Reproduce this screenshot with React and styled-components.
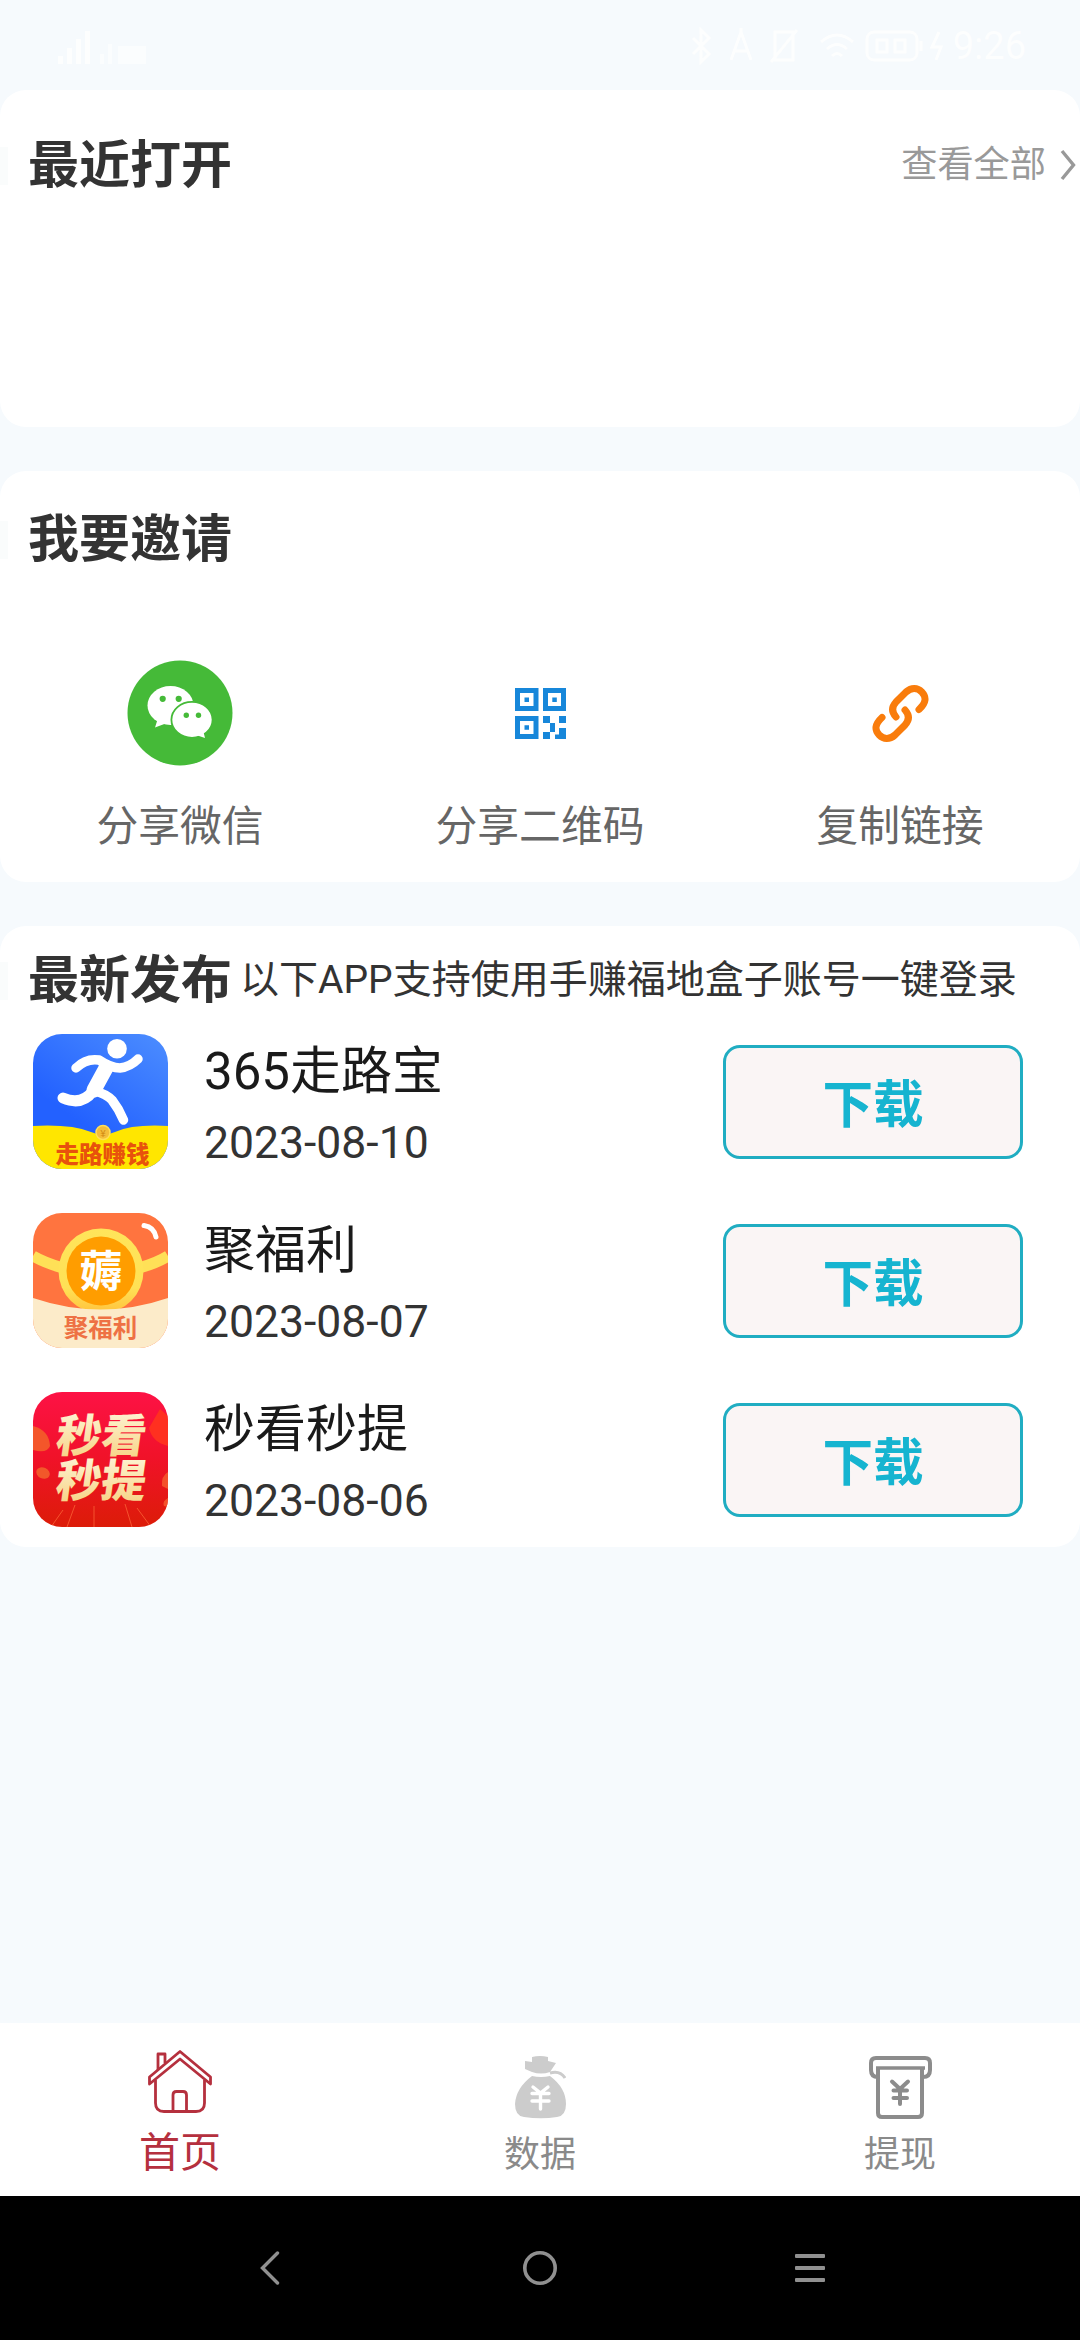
import React from "react";
import styled, { createGlobalStyle } from "styled-components";

const FONT = `Roboto, "Noto Sans CJK SC", sans-serif`;

const apps = [
  { name: "365走路宝", date: "2023-08-10", icon: <WalkIcon /> },
  { name: "聚福利", date: "2023-08-07", icon: <WelfareIcon /> },
  { name: "秒看秒提", date: "2023-08-06", icon: <FlashIcon /> }
];

const App = () => {
  return (
    <Screen>
      <GlobalStyle />
      <StatusBar>
        <SignalIcon />
        <StatusRight>
          <StatusIcons />
          <Clock>9:26</Clock>
        </StatusRight>
      </StatusBar>

      <Card $height="337px">
        <CardHeader $top="38px">
          <Title>最近打开</Title>
          <More>
            查看全部
            <svg width="16" height="32" viewBox="0 0 16 32" fill="none">
              <path d="M2 2 L13.5 16 L2 30" stroke="#999" strokeWidth="3.4" />
            </svg>
          </More>
        </CardHeader>
      </Card>

      <Card $height="411px">
        <CardHeader $top="31px">
          <Title>我要邀请</Title>
        </CardHeader>
        <ShareRow>
          <ShareItem>
            <IconSlot>
              <WechatIcon />
            </IconSlot>
            分享微信
          </ShareItem>
          <ShareItem>
            <IconSlot>
              <QrIcon />
            </IconSlot>
            分享二维码
          </ShareItem>
          <ShareItem>
            <IconSlot>
              <LinkIcon />
            </IconSlot>
            复制链接
          </ShareItem>
        </ShareRow>
      </Card>

      <Card $height="621px">
        <CardHeader $top="17px">
          <Title>最新发布</Title>
          <Subtitle>以下APP支持使用手赚福地盒子账号一键登录</Subtitle>
        </CardHeader>
        <AppList>
          {apps.map(app => (
            <AppRow key={app.name}>
              <AppIcon>{app.icon}</AppIcon>
              <AppInfo>
                <AppName>{app.name}</AppName>
                <AppDate>{app.date}</AppDate>
              </AppInfo>
              <Download>下载</Download>
            </AppRow>
          ))}
        </AppList>
      </Card>

      <Spacer />

      <TabBar>
        <Tab $active>
          <HomeIcon />
          <TabLabel $active>首页</TabLabel>
        </Tab>
        <Tab>
          <BagIcon />
          <TabLabel>数据</TabLabel>
        </Tab>
        <Tab>
          <CashIcon />
          <TabLabel>提现</TabLabel>
        </Tab>
      </TabBar>

      <SystemNav>
        <svg width="20" height="34" viewBox="0 0 20 34" fill="none">
          <path d="M17.5 2 L2.5 17 L17.5 32" stroke="#909090" strokeWidth="3.4" strokeLinecap="round" />
        </svg>
        <svg width="36" height="36" viewBox="0 0 36 36" fill="none">
          <circle cx="18" cy="18" r="15.2" stroke="#909090" strokeWidth="3.6" />
        </svg>
        <svg width="30" height="30" viewBox="0 0 30 30" fill="#909090">
          <rect y="1" width="30" height="4" rx="1" />
          <rect y="13" width="30" height="4" rx="1" />
          <rect y="25" width="30" height="4" rx="1" />
        </svg>
      </SystemNav>
    </Screen>
  );
};

export default App;

function SignalIcon() {
  return (
    <svg width="92" height="40" viewBox="0 0 92 40" fill="#fff">
      <path d="M0 38V30h5v8zM9 38V22h5v16zM18 38V13h5v25zM27 38V5h5v33z" />
      <path d="M42 38V28h4v10zM50 38V18h4v20zM60 20h28v18H60z" opacity="0.7" />
    </svg>
  );
}

function StatusIcons() {
  return (
    <svg width="260" height="44" viewBox="0 0 260 44" fill="none" stroke="#fff" strokeWidth="3">
      <path d="M4 14 L20 30 L12 38 V6 L20 14 L4 30" />
      <path d="M42 36 L52 8 L62 36 M46 27 H58 M52 4 V8" />
      <path d="M86 8 H104 V36 H86 Z M82 38 L108 6" />
      <path d="M132 18 Q148 4 164 18 M138 25 Q148 16 158 25 M143 32 Q148 27 153 32" />
      <rect x="178" y="8" width="50" height="28" rx="7" />
      <path d="M188 16 h10 v12 h-10 z M206 16 h10 v12 h-10 z M232 17 V27" />
      <path d="M250 8 L243 23 H252 L247 36" />
    </svg>
  );
}

function WechatIcon() {
  return (
    <svg width="106" height="106" viewBox="0 0 106 106">
      <circle cx="53" cy="53" r="52.5" fill="#45ba38" />
      <ellipse cx="43.5" cy="45.5" rx="23" ry="19.5" fill="#fff" />
      <path d="M31 58 L28 67.5 L40 63 Z" fill="#fff" />
      <ellipse cx="65" cy="59.8" rx="20.6" ry="18" fill="#fff" stroke="#45ba38" strokeWidth="1.8" />
      <path d="M69 75 L78 78 L76 70 Z" fill="#fff" />
      <g fill="#45ba38">
        <circle cx="35.7" cy="38.8" r="3.1" />
        <circle cx="51.7" cy="38.8" r="3.1" />
        <circle cx="59.3" cy="55.3" r="2.7" />
        <circle cx="71.5" cy="55.3" r="2.7" />
      </g>
    </svg>
  );
}

function QrIcon() {
  return (
    <svg width="51" height="51" viewBox="0 0 51 51">
      <g fill="none" stroke="#1787da" strokeWidth="5">
        <path d="M2.5 2.5H21V20.5H2.5ZM30.5 2.5H48.5V20.5H30.5ZM2.5 30.5H21V48.5H2.5Z" />
      </g>
      <g fill="#1787da">
        <path d="M9.5 9.5h4.5v4.5h-4.5zM37.3 9.5h4.5v4.5h-4.5zM9.5 37.3h4.5v4.5h-4.5z" />
        <path d="M28 28h7v7h-7zM44 28h7v7h-7zM35 35h5v9h-5zM28 44h7v7h-7zM44 40h7v11h-11v-4.5h4z" />
      </g>
    </svg>
  );
}

function LinkIcon() {
  return (
    <svg width="57" height="57" viewBox="0 0 57 57" fill="none" stroke="#f97c0c" strokeWidth="7" strokeLinecap="round">
      <path d="M24 32 C19.5 27 19.5 22 24 17 L34 7 C39.5 2.2 45.5 2.6 49.8 7 C54.5 12 54.5 17.5 47 24.5" />
      <path d="M33 25 C37.5 30 37.5 35 33 40 L23 50 C17.5 54.8 11.5 54.4 7.2 50 C2.5 45 2.5 39.5 10 32.5" />
    </svg>
  );
}

function WalkIcon() {
  return (
    <svg width="135" height="135" viewBox="0 0 135 135">
      <defs>
        <linearGradient id="sky" x1="0.9" y1="0" x2="0.2" y2="1">
          <stop offset="0" stopColor="#4a8bff" />
          <stop offset="0.7" stopColor="#2361ff" />
        </linearGradient>
      </defs>
      <rect width="135" height="135" fill="url(#sky)" />
      <path d="M0 92 Q38 90 58 98 Q70 103 82 98 Q100 90 135 92 V135 H0 Z" fill="#ffe600" />
      <circle cx="84" cy="14.7" r="9.8" fill="#fff" />
      <g fill="none" stroke="#fff" strokeLinecap="round" strokeLinejoin="round">
        <path d="M43 34 Q53 24 66 26 Q78 34 87 34 Q97 33 105 25" strokeWidth="9.5" />
        <path d="M73 34 L61 56" strokeWidth="15" />
        <path d="M30 64 Q49 72 60 57" strokeWidth="11" />
        <path d="M62 57 Q73 60 79 66 Q86 75 90.5 86" strokeWidth="9.5" />
      </g>
      <circle cx="70" cy="98.5" r="7" fill="#f4bd3a" stroke="#ffdf58" strokeWidth="1.5" />
      <text x="70" y="102.5" fontSize="10" textAnchor="middle" fill="#d28a12">¥</text>
      <text x="69.5" y="128.5" fontSize="23.5" fontWeight="900" textAnchor="middle" fill="#e8520c">走路赚钱</text>
    </svg>
  );
}

function WelfareIcon() {
  return (
    <svg width="135" height="135" viewBox="0 0 135 135">
      <defs>
        <linearGradient id="ring" x1="0" y1="0" x2="0" y2="1">
          <stop offset="0" stopColor="#ffe45a" />
          <stop offset="0.7" stopColor="#ffe156" />
          <stop offset="1" stopColor="#ffc23c" />
        </linearGradient>
      </defs>
      <rect width="135" height="135" fill="#ff743f" />
      <path d="M0 43 Q12 50 30 55 M106 55 Q124 50 135 43" stroke="#ffe057" strokeWidth="11" fill="none" />
      <circle cx="68" cy="58" r="42.5" fill="url(#ring)" />
      <circle cx="68" cy="58" r="34.5" fill="#ff9d00" />
      <path d="M0 85 Q68 108 135 85 V135 H0 Z" fill="#fcebc9" />
      <path d="M111 12.5 Q121 14 123 24" stroke="#fff" strokeWidth="5" strokeLinecap="round" fill="none" />
      <text x="68" y="74" fontSize="43" fontWeight="700" textAnchor="middle" fill="#fff">薅</text>
      <text x="67.5" y="124" fontSize="24.5" fontWeight="700" textAnchor="middle" fill="#ee7144">聚福利</text>
    </svg>
  );
}

function FlashIcon() {
  return (
    <svg width="135" height="135" viewBox="0 0 135 135">
      <defs>
        <linearGradient id="red" x1="0" y1="0" x2="0" y2="1">
          <stop offset="0" stopColor="#fd1245" />
          <stop offset="0.5" stopColor="#f01228" />
          <stop offset="1" stopColor="#dc1c08" />
        </linearGradient>
        <linearGradient id="gold" x1="0" y1="0" x2="0" y2="1">
          <stop offset="0" stopColor="#fffbe4" />
          <stop offset="1" stopColor="#f6cf7c" />
        </linearGradient>
      </defs>
      <rect width="135" height="135" fill="url(#red)" />
      <path d="M30 118 L18 135 M42 113 L34 135 M61 114 V135 M92 112 L99 135 M104 116 L118 135" stroke="#f5532e" strokeWidth="1" />
      <path d="M0 34 Q16 38 17 54 Q14 62 0 58 Z" fill="#f4562a" />
      <ellipse cx="10" cy="81" rx="7" ry="5.5" fill="#f2582a" transform="rotate(25 10 81)" />
      <path d="M127 17 L116 36 Q119 50 135 54 V24 Z" fill="#ff3020" />
      <path d="M135 80 Q128 84 129 94 L135 97 Z M135 106 Q129 109 131 114 L135 115 Z" fill="#f4502b" />
      <g transform="skewX(-8)" fill="url(#gold)" fontSize="45" fontWeight="900" textAnchor="middle">
        <text x="75" y="60">秒看</text>
        <text x="81" y="105">秒提</text>
      </g>
    </svg>
  );
}

function HomeIcon() {
  return (
    <svg width="64" height="64" viewBox="0 0 64 64" fill="none" stroke="#b5303e" strokeWidth="2.8" strokeLinejoin="round">
      <path d="M1.5 27 L32 1.5 L62.5 27 V34 L32 9 L1.5 34 Z" />
      <path d="M10 20 V4 H17 V13" />
      <path d="M7.5 30 V53 Q7.5 61.5 16 61.5 H48 Q56.5 61.5 56.5 53 V30" />
      <path d="M25 61 V45 Q25 41.5 28.5 41.5 H35 Q38.5 41.5 38.5 45 V61" />
    </svg>
  );
}

function BagIcon() {
  return (
    <svg width="51" height="64" viewBox="0 0 51 64" fill="#ccc">
      <path d="M10 5 L17 6 V1 Q25 -1 33 1 V5 L41 7 L35 16 Q26 19 17 16 L10 13 Z" />
      <path d="M35 17 Q45 14 50 22" fill="none" stroke="#ccc" strokeWidth="3" />
      <path d="M17 20 Q26 22 35 20 Q51 32 51 48 Q51 60 42 61 Q26 63.5 9 61 Q0 60 0 48 Q1 32 17 20 Z" />
      <path d="M18 31 L25.5 37 L33 31 M17 37.5 H34 M17 45 H34 M25.5 37 V53" fill="none" stroke="#fff" strokeWidth="3.4" strokeLinecap="round" />
    </svg>
  );
}

function CashIcon() {
  return (
    <svg width="63" height="64" viewBox="0 0 63 64" fill="none" stroke="#8c8c8c" strokeWidth="4">
      <path d="M9 21 Q2 21 2 14 V7 Q2 2 7 2 H56 Q61 2 61 7 V14 Q61 21 54 21" />
      <path d="M7 12 H56" strokeWidth="3.5" />
      <path d="M9 12 V57 Q9 61 13 61 H49 Q53 61 53 57 V12" />
      <path d="M23 25.5 L31 33 L39 25.5 M24.5 34.5 H38 M24.5 42 H38 M31 33 V48" strokeLinecap="round" />
    </svg>
  );
}

const GlobalStyle = createGlobalStyle`
  body {
    margin: 0;
    background: #f6fafd;
    font-family: ${FONT};
  }
  * {
    box-sizing: border-box;
  }
  svg {
    display: block;
    flex-shrink: 0;
  }
  svg text {
    font-family: "Noto Sans CJK SC", sans-serif;
  }
`;

const Screen = styled.div`
  display: flex;
  flex-direction: column;
  width: 1080px;
  height: 2340px;
  overflow: hidden;
  background: #f6fafd;
`;

const StatusBar = styled.div`
  display: flex;
  justify-content: space-between;
  align-items: center;
  height: 90px;
  flex-shrink: 0;
  padding: 2px 54px 0 58px;
  opacity: 0.85;
`;

const StatusRight = styled.div`
  display: flex;
  align-items: center;
  gap: 4px;
`;

const Clock = styled.span`
  font-size: 38px;
  line-height: 44px;
  color: #fff;
`;

const Card = styled.section`
  height: ${p => p.$height};
  flex-shrink: 0;
  background: #fff;
  border-radius: 26px;

  & + & {
    margin-top: 44px;
  }
`;

const CardHeader = styled.header`
  display: flex;
  align-items: center;
  height: calc(${p => p.$top} + 76px);
  padding: ${p => p.$top} 4px 0 0;

  &::before {
    content: "";
    width: 8px;
    height: 38px;
    margin-right: 20px;
    background: #fafcfc;
  }
`;

const Title = styled.h2`
  margin: 0;
  font-size: 51px;
  font-weight: 700;
  line-height: 76px;
  color: #333;
  white-space: nowrap;
`;

const Subtitle = styled.span`
  margin: -3px 0 0 8px;
  font-size: 39px;
  line-height: 76px;
  color: #333;
  white-space: nowrap;
`;

const More = styled.div`
  display: flex;
  align-items: center;
  gap: 14px;
  margin: -2px 0 0 auto;
  font-size: 36.2px;
  line-height: 76px;
  color: #999;
`;

const ShareRow = styled.div`
  display: grid;
  grid-template-columns: repeat(3, 1fr);
  padding-top: 82px;
`;

const ShareItem = styled.div`
  display: flex;
  flex-direction: column;
  align-items: center;
  font-size: 41.8px;
  line-height: 60px;
  color: #666;
`;

const IconSlot = styled.div`
  display: flex;
  align-items: center;
  justify-content: center;
  height: 106px;
  margin-bottom: 31px;
`;

const AppList = styled.div`
  display: flex;
  flex-direction: column;
  gap: 44px;
  padding: 15px 57px 0 33px;
`;

const AppRow = styled.div`
  display: flex;
  align-items: center;
  height: 135px;
`;

const AppIcon = styled.div`
  width: 135px;
  height: 135px;
  border-radius: 29px;
  overflow: hidden;
`;

const AppInfo = styled.div`
  display: flex;
  flex-direction: column;
  margin-left: 36px;
  padding-top: 9px;
`;

const AppName = styled.span`
  font-size: 51px;
  line-height: 74px;
  color: #1a1a1a;
`;

const AppDate = styled.span`
  font-size: 44.5px;
  line-height: 68px;
  color: #333;
`;

const Download = styled.button`
  width: 300px;
  height: 114px;
  margin-left: auto;
  padding: 0 0 2px;
  border: 3px solid #20adc2;
  border-radius: 17px;
  background: #faf5f5;
  font-family: ${FONT};
  font-size: 50.6px;
  font-weight: 700;
  color: #16b4d0;
`;

const Spacer = styled.div`
  flex: 1;
`;

const TabBar = styled.nav`
  display: grid;
  grid-template-columns: repeat(3, 1fr);
  height: 173px;
  flex-shrink: 0;
  background: #fff;
`;

const Tab = styled.div`
  display: flex;
  flex-direction: column;
  align-items: center;
  padding-top: ${p => (p.$active ? "27px" : "33px")};
`;

const TabLabel = styled.span`
  margin-top: ${p => (p.$active ? "9px" : "5px")};
  font-size: ${p => (p.$active ? "41px" : "36px")};
  line-height: 60px;
  color: ${p => (p.$active ? "#b5303e" : "#8a8a8a")};
`;

const SystemNav = styled.footer`
  display: grid;
  grid-template-columns: repeat(3, 270px);
  justify-content: center;
  align-items: center;
  justify-items: center;
  height: 144px;
  flex-shrink: 0;
  background: #000;
`;
